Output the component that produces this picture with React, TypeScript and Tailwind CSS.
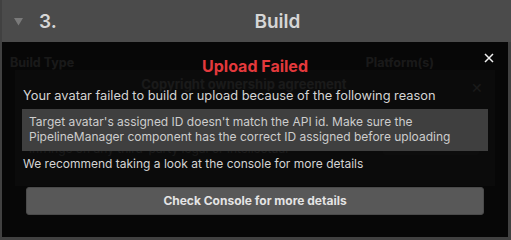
const App = () => {
  return (
    <div className="w-[511px] h-[240px] bg-[#414141] font-['Inter',sans-serif] overflow-hidden">
      {/* section header */}
      <div className="ml-[2px] h-[42px] bg-[#4b4b4b] flex items-center">
        <svg width="9" height="8" viewBox="0 0 9 8" className="ml-[12px] mt-[1px]">
          <path d="M0 0 H9 L4.5 7.5 Z" fill="#7a7a7a" />
        </svg>
        <span className="ml-[16px] text-[19px] font-semibold text-[#d6d6d6] leading-none">3.</span>
        <div className="flex-1 text-center pr-[13px] text-[19px] font-semibold text-[#d6d6d6] leading-none">
          Build
        </div>
      </div>

      {/* build panel, dimmed by the overlay */}
      <div className="relative ml-[2px] w-[506px] h-[195px] bg-[#383838]">
        <div className="flex justify-between pt-[12px] pl-[8px] pr-[74px] text-[12.5px] font-bold text-[#cfcfcf]">
          <span>Build Type</span>
          <span>Platform(s)</span>
        </div>

        <div className="mt-[-3px] ml-[13px] w-[480px] h-[116px] bg-[#5a5a5a] relative">
          <div className="pt-[5px] pr-[22px] text-center text-[13px] font-bold text-[#d0d0d0]">
            Copyright ownership agreement
          </div>
          <div className="absolute right-[12px] top-[7px] text-[#d0d0d0] text-[14px]">✕</div>
          <div className="flex mt-[16px]">
            <div className="flex-1 pl-[14px] text-[12px] leading-[15.5px] text-[#d0d0d0]">
              <p>By clicking OK, I certify that I have the legal rights to</p>
              <p>upload this content and that it does not contain any</p>
              <p>infringe on any third-party legal or intellectual</p>
            </div>
            <div className="w-[96px] h-[46px] mr-[16px] mt-[-1px] bg-[#6a6a6a] rounded-[3px] flex items-center justify-center text-[14px] text-[#d0d0d0]">
              OK
            </div>
          </div>
        </div>

        {/* upload failed overlay */}
        <div className="absolute inset-0 bg-black/[0.88]">
          <div className="relative pt-[14px]">
            <div className="text-center text-[16px] font-bold text-[#e3393c] leading-[20px]">Upload Failed</div>
            <svg width="10" height="10" viewBox="0 0 10 10" className="absolute right-[14px] top-[11px]">
              <path d="M1 1 L9 9 M9 1 L1 9" stroke="#f0f0f0" strokeWidth="1.5" />
            </svg>
            <p className="mt-[12px] ml-[21px] text-[12.8px] leading-[16px] text-[#d4d4d4]">
              Your avatar failed to build or upload because of the following reason
            </p>
            <div className="mt-[5px] ml-[20px] w-[466px] h-[42px] bg-[#3f3f3f] px-[7px] pt-[5px] text-[12px] leading-[15px] text-[#cdcdcd]">
              <p>Target avatar's assigned ID doesn't match the API id. Make sure the</p>
              <p>PipelineManager component has the correct ID assigned before uploading</p>
            </div>
            <p className="mt-[5px] ml-[21px] text-[12px] leading-[16px] text-[#d4d4d4]">
              We recommend taking a look at the console for more details
            </p>
            <button className="mt-[15px] ml-[24px] w-[458px] h-[28px] bg-[#585858] border border-[#4a4a4a] rounded-[3px] text-[12px] font-bold text-[#e4e4e4]">
              Check Console for more details
            </button>
          </div>
        </div>
      </div>
    </div>
  );
};

export default App;
